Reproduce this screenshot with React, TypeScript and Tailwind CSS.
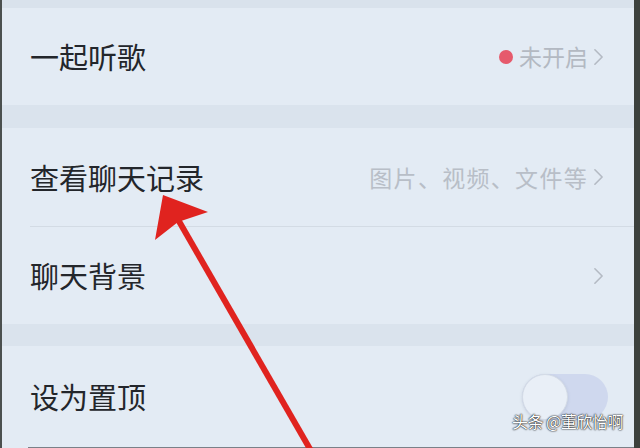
import type { ReactNode } from "react";

const cjk = "font-['Noto_Sans_CJK_SC','Noto_Sans',sans-serif]";

export default function App() {
  return (
    <div className={`relative flex h-[448px] w-[640px] overflow-hidden bg-[#e3ebf4] ${cjk}`}>
      <div className="w-[2px] shrink-0 bg-[#4b504f]" />
      <div className="flex min-w-0 flex-1 flex-col">
        <div className="h-[8px] bg-[#d9e2ec]" />
        <SettingRow height="h-[97px]" label="一起听歌">
          <span className="mr-[6px] size-[14px] rounded-full bg-[#e65a6c]" />
          <span className="text-[23px] text-[#b3b9c2]">未开启</span>
          <Chevron />
        </SettingRow>
        <div className="h-[23px] bg-[#dae3ed]" />
        <SettingRow height="h-[98px]" label="查看聊天记录">
          <span className="text-[23px] tracking-[1.3px] text-[#b8bec7]">
            图片、视频、文件等
          </span>
          <Chevron />
        </SettingRow>
        <div className="ml-[28px] h-px bg-[#d3dbe4]" />
        <SettingRow height="h-[97px]" label="聊天背景">
          <Chevron />
        </SettingRow>
        <div className="h-[22px] bg-[#dae3ed]" />
        <SettingRow height="h-[101px]" label="设为置顶">
          <Toggle />
        </SettingRow>
        <div className="ml-[26px] h-px bg-[#7a8088]" />
        <div className="flex-1" />
      </div>
      <div className="w-[6px] shrink-0 bg-[#3c413d]" />

      <Arrow />

      <div className="absolute left-[512px] top-[413px] text-[16px] leading-none tracking-[-0.5px] text-white [text-shadow:0_0_2px_#000,0_0_1px_#000]">
        头条 @董欣怡啊
      </div>
    </div>
  );
}

function SettingRow({
  height,
  label,
  children,
}: {
  height: string;
  label: string;
  children?: ReactNode;
}) {
  return (
    <div className={`flex items-center justify-between pl-[28px] pr-[30px] ${height}`}>
      <span className="text-[29px] leading-none text-[#23262b]">{label}</span>
      <div className="flex items-center">{children}</div>
    </div>
  );
}

function Chevron() {
  return (
    <svg viewBox="0 0 12 20" className="ml-[5px] h-[18px] w-[11px]" fill="none">
      <path
        d="M2 2l8 8-8 8"
        stroke="#b4bac3"
        strokeWidth="1.8"
        strokeLinecap="round"
        strokeLinejoin="round"
      />
    </svg>
  );
}

function Toggle() {
  return (
    <div className="relative mr-[-4px] flex h-[46px] w-[86px] items-center rounded-full bg-[#cfd8ee]">
      <div className="size-[46px] rounded-full border border-[#d4dbe6] bg-[#e9eff7] shadow-[0_1px_3px_rgba(120,130,160,0.25)]" />
    </div>
  );
}

function Arrow() {
  return (
    <svg
      className="pointer-events-none absolute left-0 top-0"
      width="640"
      height="448"
      viewBox="0 0 640 448"
    >
      <line
        x1="176"
        y1="216"
        x2="314"
        y2="456"
        stroke="#e0231f"
        strokeWidth="6"
      />
      <path d="M163 195 L208 212 L178 222 L155 240 Z" fill="#e0231f" />
    </svg>
  );
}
